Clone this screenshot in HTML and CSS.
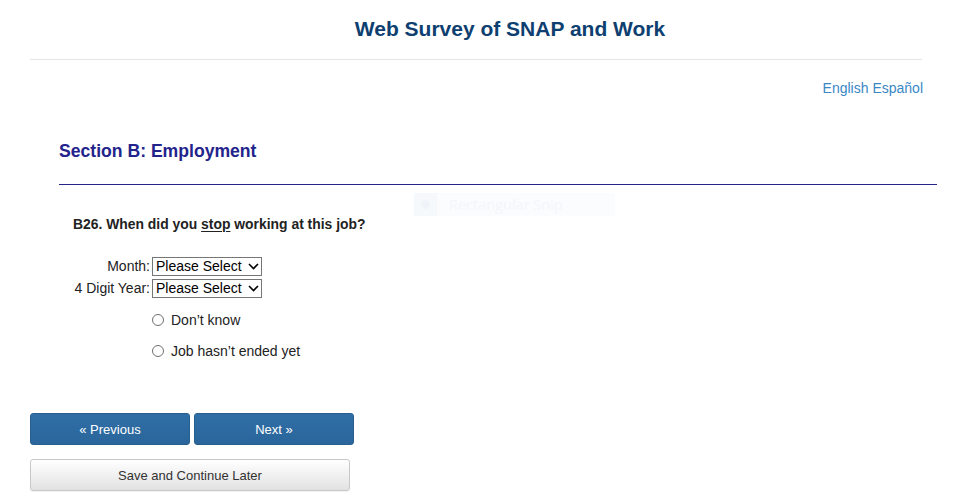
FILE: index.html
```html
<!DOCTYPE html>
<html lang="en">
<head>
<meta charset="utf-8">
<title>Web Survey of SNAP and Work</title>
<link rel="stylesheet" href="styles.css">
</head>
<body>
<div class="page">
  <header class="site-header">
    <h1 class="site-title">Web Survey of SNAP and Work</h1>
  </header>
  <nav class="lang">
    <a href="#" class="lang-link">English</a> <a href="#" class="lang-link">Español</a>
  </nav>
</div>

<section class="section">
  <h2 class="section-title">Section B: Employment</h2>
</section>

<main class="question">
  <p class="q-text">B26. When did you <u>stop</u> working at this job?</p>

  <div class="date-grid">
    <label class="field-label" for="month">Month:</label>
    <span class="select-wrap">
      <select id="month" class="select"><option>Please Select</option></select>
      <svg class="chev" width="11" height="7" viewBox="0 0 11 7"><path d="M1 1 L5.5 5.5 L10 1" fill="none" stroke="#000" stroke-width="1.6"/></svg>
    </span>
    <label class="field-label" for="year">4 Digit Year:</label>
    <span class="select-wrap">
      <select id="year" class="select"><option>Please Select</option></select>
      <svg class="chev" width="11" height="7" viewBox="0 0 11 7"><path d="M1 1 L5.5 5.5 L10 1" fill="none" stroke="#000" stroke-width="1.6"/></svg>
    </span>
  </div>

  <div class="options">
    <label class="option"><input type="radio" name="b26" class="radio"><span>Don’t know</span></label>
    <label class="option"><input type="radio" name="b26" class="radio"><span>Job hasn’t ended yet</span></label>
  </div>
</main>

<div class="actions">
  <div class="nav-buttons">
    <button class="btn btn-primary">« Previous</button>
    <button class="btn btn-primary">Next »</button>
  </div>
  <button class="btn btn-default">Save and Continue Later</button>
</div>

<div class="snip-ghost">
  <span class="snip-icon"><span class="snip-dot"></span></span>
  <span class="snip-text">Rectangular Snip</span>
</div>
</body>
</html>
```

FILE: styles.css
```css
html, body {
  margin: 0;
  padding: 0;
  background: #fff;
}
body {
  font-family: "Liberation Sans", Arial, sans-serif;
  font-size: 14px;
  color: #333;
  position: relative;
  min-height: 504px;
}
.page {
  margin: 0 36px 0 30px;
}
.site-header {
  padding: 17px 0 18px 68px;
  border-bottom: 1px solid #e6e6e6;
  margin-right: 1px;
  text-align: center;
}
.site-title {
  margin: 0;
  font-size: 21px;
  line-height: 24px;
  font-weight: bold;
  color: #0e3f70;
}
.lang {
  margin-top: 20px;
  text-align: right;
  font-size: 14px;
  line-height: 16px;
}
.lang-link {
  color: #3a87c6;
  text-decoration: none;
}
.section {
  margin: 45px 22px 0 59px;
  padding-bottom: 23px;
  border-bottom: 1px solid #24248a;
}
.section-title {
  margin: 0;
  font-size: 17.6px;
  line-height: 20px;
  font-weight: bold;
  color: #23238c;
}
.question {
  margin: 31px 0 0 73px;
}
.q-text {
  margin: 0;
  font-size: 13.9px;
  line-height: 16px;
  font-weight: bold;
  color: #222;
}
.q-text u {
  text-underline-offset: 2px;
}
.date-grid {
  margin: 25px 0 0 -14px;
  display: grid;
  grid-template-columns: 91px auto;
  column-gap: 2px;
  row-gap: 3px;
  align-items: center;
  justify-content: start;
}
.field-label {
  text-align: right;
  font-size: 14px;
  color: #222;
  line-height: 19px;
}
.select-wrap {
  position: relative;
  display: inline-block;
  width: 110px;
  height: 19px;
}
.select {
  -webkit-appearance: none;
  appearance: none;
  box-sizing: border-box;
  width: 110px;
  height: 19px;
  margin: 0;
  padding: 0 0 0 3px;
  border: 1px solid #767676;
  border-radius: 0;
  background: #fff;
  font-family: "Liberation Sans", Arial, sans-serif;
  font-size: 14px;
  line-height: 17px;
  color: #000;
  display: block;
}
.chev {
  position: absolute;
  right: 3px;
  top: 6px;
  pointer-events: none;
}
.options {
  margin: 12px 0 0 79px;
  display: flex;
  flex-direction: column;
  gap: 11px;
}
.option {
  display: flex;
  align-items: center;
  height: 20px;
  font-size: 14px;
  color: #222;
}
.radio {
  -webkit-appearance: none;
  appearance: none;
  box-sizing: border-box;
  width: 12px;
  height: 12px;
  margin: 0 7px 0 0;
  border: 1px solid #6f6f6f;
  border-radius: 50%;
  background: #fff;
}
.actions {
  margin: 52px 0 0 30px;
  display: flex;
  flex-direction: column;
  gap: 14px;
  align-items: flex-start;
}
.nav-buttons {
  display: flex;
  gap: 4px;
}
.btn {
  box-sizing: border-box;
  height: 32px;
  font-family: "Liberation Sans", Arial, sans-serif;
  font-size: 13px;
  border-radius: 3px;
  padding: 0;
  cursor: pointer;
}
.btn-primary {
  width: 160px;
  color: #fff;
  background: linear-gradient(#2f6ea6, #2a669b);
  border: 1px solid #285e8e;
}
.btn-default {
  width: 320px;
  color: #333;
  background: linear-gradient(#ffffff, #e2e2e2);
  border: 1px solid #c8c8c8;
  box-shadow: 0 1px 1px rgba(0,0,0,0.06);
}
.snip-ghost {
  position: absolute;
  left: 414px;
  top: 193px;
  width: 201px;
  height: 23px;
  background: #fafcfe;
  display: flex;
  align-items: center;
  gap: 12px;
  pointer-events: none;
}
.snip-icon {
  width: 23px;
  height: 23px;
  background: #f6f9fc;
  display: flex;
  align-items: center;
  justify-content: center;
}
.snip-dot {
  width: 9px;
  height: 9px;
  border-radius: 50%;
  background: #f0f4f8;
}
.snip-text {
  font-family: "Open Sans", sans-serif;
  font-size: 14.5px;
  color: #f4f6f9;
}
```
